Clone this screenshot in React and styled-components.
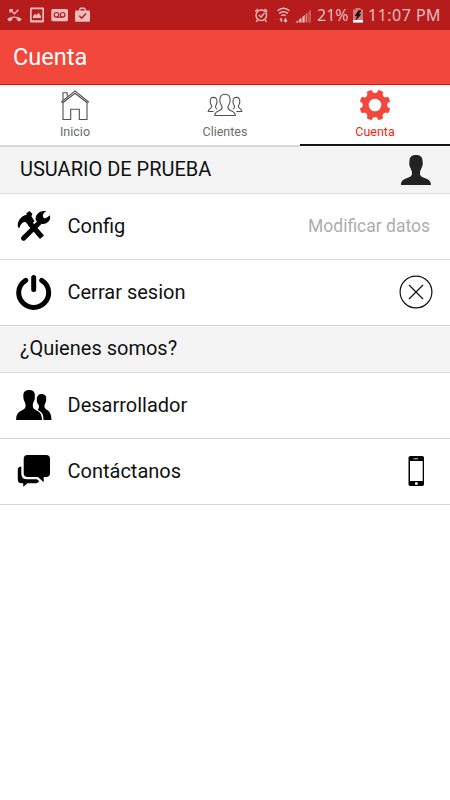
import React from 'react'
import styled, { createGlobalStyle } from 'styled-components'

const GlobalStyle = createGlobalStyle`
  * {
    box-sizing: border-box;
  }
  body {
    margin: 0;
    background: #fff;
    font-family: Roboto, sans-serif;
    font-weight: 400;
  }
  svg {
    display: block;
    flex-shrink: 0;
  }
`

const Screen = styled.div`
  width: 450px;
  height: 800px;
  background: #fff;
  overflow: hidden;
`

const StatusBar = styled.div`
  display: flex;
  align-items: center;
  justify-content: space-between;
  height: 30px;
  padding: 0 8px 0 7px;
  background: #b71c1c;
  color: #f0c4c4;
`

const StatusText = styled.span`
  width: ${props => props.$width}px;
  font-family: 'Open Sans', sans-serif;
  font-size: 16px;
  line-height: 31px;
  letter-spacing: ${props => props.$spacing || 0}px;
  white-space: nowrap;
`

const StatusGroup = styled.div`
  display: flex;
  align-items: center;
`

const Header = styled.header`
  display: flex;
  align-items: center;
  height: 55px;
  padding: 0 13px;
  background: #f2483b;
  border-bottom: 1px solid #f00a0a;
`

const Title = styled.h1`
  margin: 0;
  color: #fff;
  font-size: 23.5px;
  font-weight: 400;
`

const Tabs = styled.nav`
  display: grid;
  grid-template-columns: repeat(3, 1fr);
  height: 62px;
`

const Tab = styled.div`
  display: flex;
  flex-direction: column;
  align-items: center;
  padding-top: 4px;
  border-bottom: 2px solid ${props => props.$active ? '#161616' : '#d8d8d8'};
  color: ${props => props.$active ? '#f01f18' : '#6b6b6b'};
  height: ${props => props.$active ? 61 : 62}px;
`

const TabLabel = styled.span`
  margin-top: 3px;
  font-size: 12.5px;
  line-height: 16px;
`

const Section = styled.div`
  display: flex;
  align-items: center;
  justify-content: space-between;
  height: 47px;
  padding: 0 18px 0 20px;
  background: #f4f4f4;
  border-bottom: 1px solid #dcdcdc;
  font-size: 20px;
  line-height: 24px;
  color: #111;
`

const SectionLabel = styled.span`
  padding-bottom: 2px;
`

const Row = styled.div`
  display: flex;
  align-items: center;
  height: 66px;
  padding: 0 17px 2px 16px;
  border-bottom: 1px solid #d6d6d6;
`

const RowLabel = styled.span`
  flex: 1;
  margin-left: 15.5px;
  font-size: 20px;
  line-height: 24px;
  color: #111;
`

const RowNote = styled.span`
  margin-right: 3px;
  font-size: 17.5px;
  color: #adadad;
`

const PERSON = 'M416 155C419.7 155 422.5 156.8 422.5 160.5C423.3 164.5 422.3 166.8 421.3 168.5C420.5 170 420 171.5 420 173.5C420 179.5 431 176.5 431 185H401C401 176.5 412 179.5 412 173.5C412 171.5 411.5 170 410.7 168.5C409.7 166.8 408.7 164.5 409.5 160.5C409.5 156.8 412.3 155 416 155Z'

const polar = (r, deg) => {
  const a = deg * Math.PI / 180
  return `${(r * Math.cos(a)).toFixed(2)} ${(r * Math.sin(a)).toFixed(2)}`
}

const gearPath = [0, 1, 2, 3, 4, 5, 6, 7].map(i => {
  const a = i * 45 + 22.5
  return `${i ? 'L' : 'M'}${polar(13, a - 13)}L${polar(15.4, a - 10)}Q${polar(16, a)} ${polar(15.4, a + 10)}L${polar(13, a + 13)}Q${polar(11.4, a + 22.5)} ${polar(13, a + 32)}`
}).join('') + 'ZM6.3 0A6.3 6.3 0 1 0 -6.3 0A6.3 6.3 0 1 0 6.3 0Z'

function NotificationIcons () {
  return (
    <svg width="86" height="30" viewBox="7 0 86 30" fill="#edbcbc">
      <path d="M7.3 19.3C11 15.5 18 15.5 21.7 19.3L19.6 21.5L16.8 19.9V18.2C15.3 17.7 13.7 17.7 12.2 18.2V19.9L9.4 21.5Z" />
      <path d="M10 9.5V12.5M10 9.8H13M10.3 10L14.4 13.8L18.4 9.8" fill="none" stroke="#edbcbc" strokeWidth="1.4" />
      <path fillRule="evenodd" d="M31 7.5H43Q44 7.5 44 8.5V21.5Q44 22.5 43 22.5H31Q30 22.5 30 21.5V8.5Q30 7.5 31 7.5ZM31.7 9.2V20.3H42.3V9.2Z" />
      <path d="M33 18V16L35.2 13.8L36.5 15.3L38.5 12.8L41 16V18Z" />
      <rect x="51.3" y="9" width="16.7" height="12.3" rx="1.5" />
      <g fill="none" stroke="#b71c1c" strokeWidth="1.2">
        <circle cx="56.5" cy="14.8" r="2.3" />
        <circle cx="62.7" cy="14.8" r="2.3" />
        <path d="M56.5 17.2H62.7" />
      </g>
      <path fillRule="evenodd" d="M79 10.5V9L80.5 7.4H84.5L86 9V10.5H89Q90 10.5 90 11.5V20.7Q90 21.8 89 21.8H76Q75 21.8 75 20.7V11.5Q75 10.5 76 10.5ZM80.5 10.5H84.5V8.9H80.5Z" />
      <path d="M79.3 15.8L81.7 18.2L86 13.6" fill="none" stroke="#b71c1c" strokeWidth="1.5" />
    </svg>
  )
}

function SignalIcons () {
  return (
    <svg width="63" height="30" viewBox="254 0 63 30" fill="none" stroke="#efc2c2">
      <circle cx="261.3" cy="15.3" r="5.3" strokeWidth="1.3" />
      <path d="M255.3 11.5L258 9M267.3 11.5L264.6 9M257.5 20L256.2 21.8M265.1 20L266.4 21.8M258.8 15L261 17L264.4 13.2" strokeWidth="1.3" />
      <path d="M277.5 10.8Q283.5 5.7 289.5 10.8M279.2 13.4Q283.5 9.9 287.8 13.4M281.2 15.8Q283.5 14 285.8 15.8" strokeWidth="1.4" />
      <path d="M281.5 22V18.5M280 20L281.5 18.3M285.5 18V21.5M284 20L285.5 21.8L287 20" strokeWidth="1.2" />
      <g stroke="none" fill="#efc2c2">
        <path d="M295.3 22.5L298.3 20.2V22.5ZM299.2 22.5V19.5L301.5 17.7V22.5ZM302.4 22.5V16.9L304.7 15V22.5Z" />
        <path d="M305.6 22.5V14.2L307.4 12.6V22.5Z" opacity="0.6" />
        <path d="M308.3 22.5V11.8L311 9.2V22.5Z" opacity="0.35" />
      </g>
    </svg>
  )
}

function BatteryIcon () {
  return (
    <svg width="18" height="30" viewBox="350 0 18 30">
      <path d="M355.5 8H360.5V9.5H363V22.5H353V9.5H355.5Z" fill="#d77878" />
      <path d="M353 20H363V22.5H353Z" fill="#fff" />
      <path d="M358.8 10.5L355 15.8H357.3L356 20L360.8 14.3H358.5L361 10.8Z" fill="#160202" stroke="#160202" strokeWidth=".5" />
    </svg>
  )
}

function HomeIcon () {
  return (
    <svg width="32" height="32" viewBox="59 89 32 32" fill="none" stroke="#505050" strokeWidth="1.1">
      <path d="M61.1 102.3L75 90.9L88.9 102.3M62.5 103L75 93.2L87.5 103" />
      <path d="M63 102.5V119.5H70.7V109.3H79.3V119.5H87V102.5" />
      <path d="M63 100V92.8H67.2V96.5" />
    </svg>
  )
}

function ClientsIcon () {
  const side = 'M213.5 97.4C216 97.4 217.1 99 217 101.5C217.2 104 215.7 105 215.5 106.4C215.4 108.2 216 108.8 217.1 109.3M213.5 97.4C211 97.4 210.1 99 210.2 101.5C210 104 211.6 105 211.7 106.4C211.8 108.5 208.7 108.3 208.2 111.5H213.6'
  return (
    <svg width="36" height="32" viewBox="207 89 36 32" fill="none" stroke="#505050" strokeWidth="1.1">
      <path d="M225 94.3C228.5 94.3 230.3 96.5 230.1 100C230.7 103.7 228.1 104.8 227.9 107.2C227.7 111.8 235 109.8 235.3 115.5H214.7C215 109.8 222.3 111.8 222.1 107.2C221.9 104.8 219.3 103.7 219.9 100C219.7 96.5 221.5 94.3 225 94.3Z" />
      <path d={side} />
      <path d={side} transform="matrix(-1 0 0 1 450 0)" />
    </svg>
  )
}

function GearIcon () {
  return (
    <svg width="32" height="32" viewBox="-16 -16 32 32">
      <path d={gearPath} fill="#f2483b" fillRule="evenodd" />
    </svg>
  )
}

function PersonIcon () {
  return (
    <svg width="32" height="32" viewBox="400 154 32 32">
      <path d={PERSON} fill="#222" />
    </svg>
  )
}

function ToolsIcon () {
  return (
    <svg width="36" height="36" viewBox="16 208 36 36">
      <path d="M24 237.7L39.5 222.5" stroke="#000" strokeWidth="5" />
      <path d="M24 237.7L23.5 238.2" stroke="#000" strokeWidth="5" strokeLinecap="round" />
      <path d="M46.3 211.2C43.8 212.5 42.6 214 42.9 216.4C43.5 218.2 45 218.6 46.6 217.8L49.9 215.3C51.3 220 47.6 224.2 42.3 223.9L38.5 223.5L35.8 220.2C34.5 215 39.8 209.6 46.3 211.2Z" />
      <path d="M30 223.5L42 237.2" stroke="#000" strokeWidth="5.4" />
      <path d="M26 213.7L29.3 211L32.4 213.7L31.4 216.2L34.5 221.3L29 226L25.8 222.3C23.5 221.2 20.5 223.3 19.2 228.5L17.8 226.5C17.3 221.5 20.3 215.8 27.2 214.7Z" />
    </svg>
  )
}

function PowerIcon () {
  return (
    <svg width="36" height="36" viewBox="16 274 36 36" fill="none" stroke="#000" strokeWidth="5" strokeLinecap="round">
      <path d="M33.7 277.5V289.5M25.7 280.3C20.8 283.5 18.7 288 18.7 292.5A15 15 0 0 0 48.7 292.5C48.7 288 46.6 283.5 41.7 280.3" />
    </svg>
  )
}

function CloseIcon () {
  return (
    <svg width="34" height="34" viewBox="-17 -17 34 34" fill="none" stroke="#111" strokeWidth="1.2">
      <circle r="15.9" />
      <path d="M-7 -7L7 7M7 -7L-7 7" />
    </svg>
  )
}

function PeopleIcon () {
  return (
    <svg width="36" height="36" viewBox="16 387 36 36">
      <path d="M41.5 394C45 394 46.7 396.2 46.2 400C46.2 403 44.4 403.6 44.4 406.5C44.6 410.8 51.5 408.5 51.5 420H43.5C43.7 411 38.7 411.5 37.8 409.5C39.2 408.5 39 406.8 39 405.5C37.5 403.5 36.6 402.5 36.8 399C36.8 396 38.5 394 41.5 394Z" />
      <path d="M29.2 390C33.6 390 35.3 392.4 34.8 397C35 401.2 32.8 401.7 32.8 405.5C33 412.5 42 408.2 42 420H16.2C16.2 408.2 25.4 412.5 25.6 405.5C25.6 401.7 23.4 401.2 23.4 397C22.9 392.4 24.8 390 29.2 390Z" />
    </svg>
  )
}

function ChatIcon () {
  return (
    <svg width="36" height="36" viewBox="16 453 36 36">
      <path d="M27.5 455H46Q50 455 50 459V473Q50 477 46 477H43.7V482.2L38 477H27.5Q23.7 477 23.7 473V459Q23.7 455 27.5 455Z" />
      <path d="M21.3 466.5V473.8Q21.3 479.3 27 479.3H36.7L39.2 481Q38 483.3 36 483.3H27.5L23.2 486.8V483.3H21.5Q17.8 483.3 17.8 479.5V470Q17.8 466.5 21.3 466.5Z" />
    </svg>
  )
}

function PhoneIcon () {
  return (
    <svg width="34" height="34" viewBox="399 454 34 34">
      <rect x="408.5" y="456" width="15.5" height="30" rx="1.8" />
      <rect x="410" y="461" width="12.7" height="20" fill="#fff" />
      <rect x="413.5" y="458" width="4.5" height="1.4" fill="#999" />
      <rect x="415" y="482.2" width="2.7" height="2.6" rx=".6" fill="#fff" />
    </svg>
  )
}

export default function App () {
  return (
    <>
      <GlobalStyle />
      <Screen>
        <StatusBar>
          <NotificationIcons />
          <StatusGroup>
            <SignalIcons />
            <StatusText $width={33}>21%</StatusText>
            <BatteryIcon />
            <StatusText $width={74} $spacing={0.5}>11:07 PM</StatusText>
          </StatusGroup>
        </StatusBar>
        <Header>
          <Title>Cuenta</Title>
        </Header>
        <Tabs>
          <Tab>
            <HomeIcon />
            <TabLabel>Inicio</TabLabel>
          </Tab>
          <Tab>
            <ClientsIcon />
            <TabLabel>Clientes</TabLabel>
          </Tab>
          <Tab $active>
            <GearIcon />
            <TabLabel>Cuenta</TabLabel>
          </Tab>
        </Tabs>
        <Section>
          <SectionLabel>USUARIO DE PRUEBA</SectionLabel>
          <PersonIcon />
        </Section>
        <Row>
          <ToolsIcon />
          <RowLabel>Config</RowLabel>
          <RowNote>Modificar datos</RowNote>
        </Row>
        <Row>
          <PowerIcon />
          <RowLabel>Cerrar sesion</RowLabel>
          <CloseIcon />
        </Row>
        <Section>
          <SectionLabel>¿Quienes somos?</SectionLabel>
        </Section>
        <Row>
          <PeopleIcon />
          <RowLabel>Desarrollador</RowLabel>
        </Row>
        <Row>
          <ChatIcon />
          <RowLabel>Contáctanos</RowLabel>
          <PhoneIcon />
        </Row>
      </Screen>
    </>
  )
}
